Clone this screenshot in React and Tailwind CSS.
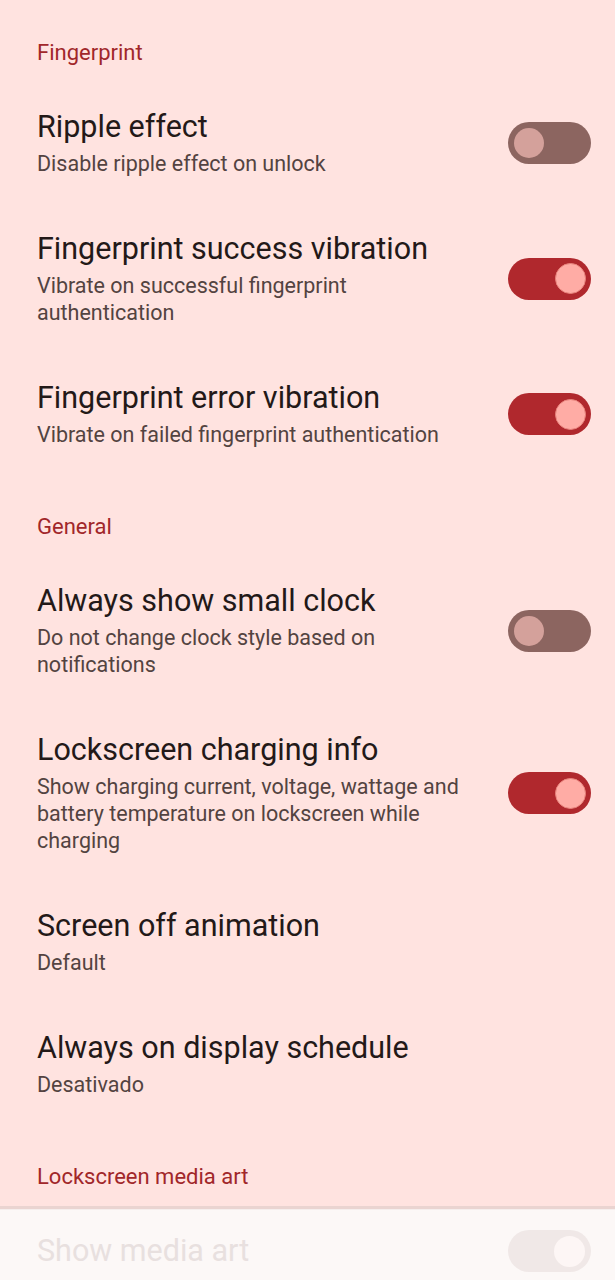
import React from "react";

// Lockscreen settings screen (Fingerprint / General / Media art)

const Toggle = ({ on, disabled = false }) => {
  if (disabled) {
    return (
      <div className="w-[83px] h-[42px] shrink-0 rounded-full bg-[#f0e8e7] flex items-center justify-end px-[6px]">
        <div className="w-[31px] h-[31px] rounded-full bg-[#fdf6f5]" />
      </div>
    );
  }
  return on ? (
    <div className="w-[83px] h-[42px] shrink-0 rounded-full bg-[#b0282d] flex items-center justify-end px-[5px]">
      <div className="w-[31px] h-[31px] rounded-full bg-[#ffaca5] border border-[#e8847d]" />
    </div>
  ) : (
    <div className="w-[83px] h-[42px] shrink-0 rounded-full bg-[#8c6560] flex items-center justify-start px-[6px]">
      <div className="w-[30px] h-[30px] rounded-full bg-[#d4a19b]" />
    </div>
  );
};

const SectionHeader = ({ label, first = false }) => (
  <div className={`px-[37px] ${first ? "pt-[41px]" : "pt-[40px]"} pb-[17px]`}>
    <h3 className="text-[22px] leading-[24px] font-normal text-[#a1272a]">{label}</h3>
  </div>
);

const SettingRow = ({ title, summary, toggle }) => (
  <div className="flex items-center pl-[37px] pr-[24px] py-[27px] gap-[36px]">
    <div className="flex-1 min-w-0">
      <div className="text-[30.5px] leading-[36px] text-[#231918]">{title}</div>
      {summary && (
        <div className="mt-[5px] text-[21.5px] leading-[27px] text-[#534341]">{summary}</div>
      )}
    </div>
    {toggle !== undefined && <Toggle on={toggle} />}
  </div>
);

export default function App() {
  return (
    <div className="w-[615px] h-[1280px] overflow-hidden bg-[#ffe3e0] font-['Roboto',sans-serif] flex flex-col">
      <SectionHeader label="Fingerprint" first />
      <SettingRow title="Ripple effect" summary="Disable ripple effect on unlock" toggle={false} />
      <SettingRow
        title="Fingerprint success vibration"
        summary="Vibrate on successful fingerprint authentication"
        toggle={true}
      />
      <SettingRow
        title="Fingerprint error vibration"
        summary="Vibrate on failed fingerprint authentication"
        toggle={true}
      />

      <SectionHeader label="General" />
      <SettingRow
        title="Always show small clock"
        summary="Do not change clock style based on notifications"
        toggle={false}
      />
      <SettingRow
        title="Lockscreen charging info"
        summary="Show charging current, voltage, wattage and battery temperature on lockscreen while charging"
        toggle={true}
      />
      <SettingRow title="Screen off animation" summary="Default" />
      <SettingRow title="Always on display schedule" summary="Desativado" />

      <SectionHeader label="Lockscreen media art" />

      {/* disabled area below the divider */}
      <div className="flex-1 bg-[#fcf8f7] border-t-[3px] border-[#ead4d1]">
        <div className="h-px bg-[#f6eeed]" />
        <div className="flex items-center pl-[37px] pr-[24px] pt-[20px]">
          <div className="flex-1 text-[30.5px] leading-[36px] text-[#e8e0df]">Show media art</div>
          <Toggle disabled />
        </div>
      </div>
    </div>
  );
}
